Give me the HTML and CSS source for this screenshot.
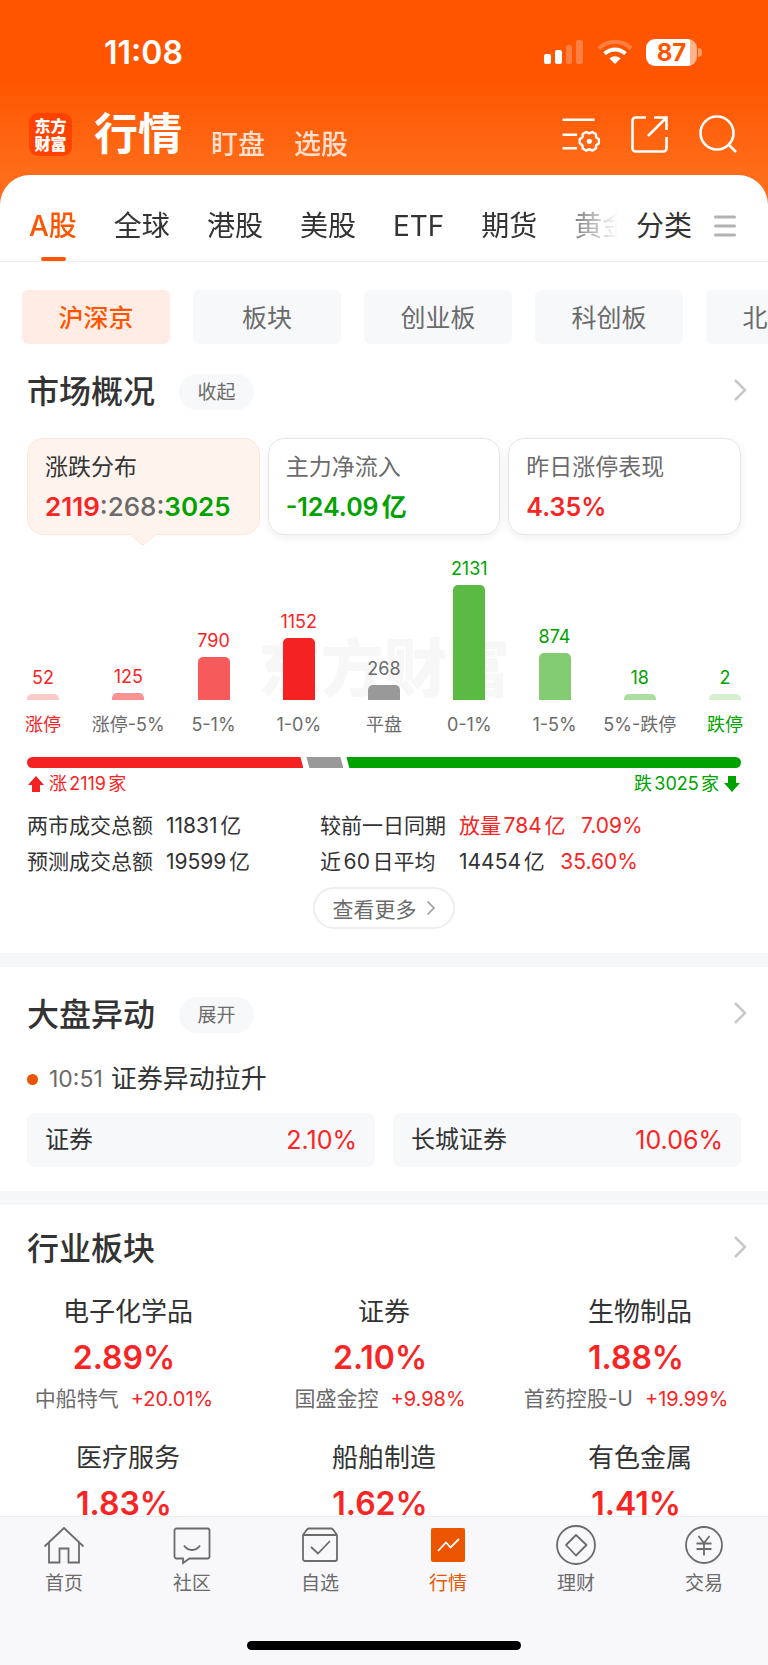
FILE: index.html
```html
<!DOCTYPE html>
<html lang="zh-CN">
<head>
    <meta charset="UTF-8">
    <meta name="viewport" content="width=device-width, initial-scale=1.0">
    <title>行情</title>
    <link rel="stylesheet" href="styles.css">
</head>
<body>
    <header class="header">
        <div class="status-bar">
            <span class="time">11:08</span>
            <div class="status-icons">
                <svg width="40" height="26" viewBox="0 0 40 26" fill="#fff">
                    <rect x="0" y="15" width="7" height="10" rx="2"/>
                    <rect x="11" y="11" width="7" height="14" rx="2"/>
                    <rect x="22" y="6" width="6" height="19" rx="2" opacity=".25"/>
                    <rect x="32" y="1" width="7" height="24" rx="2" opacity=".25"/>
                </svg>
                <svg width="36" height="26" viewBox="0 0 36 26" fill="none" stroke="#fff" stroke-width="4">
                    <path d="M2 9.5C11 .6 25 .6 34 9.5" opacity=".25"/>
                    <path d="M7.6 14.8c6-5.6 14.8-5.6 20.800 0"/>
                    <path d="M12.500 19.500c3.200-2.900 7.800-2.900 11 0L18 25z" fill="#fff" stroke="none"/>
                </svg>
                <div class="battery"><span class="battery-level">87</span></div>
            </div>
        </div>
        <div class="top-bar">
            <div class="logo">东方<br>财富</div>
            <nav class="top-nav">
                <h1>行情</h1>
                <a href="#">盯盘</a>
                <a href="#">选股</a>
            </nav>
            <div class="top-actions">
                <button type="button" aria-label="设置">
                    <svg width="40" height="40" viewBox="0 0 40 40" fill="none" stroke="#fff" stroke-width="2.600">
                        <path d="M2.500 5.700h32M2.500 20.700H17M2.500 34.300H17"/>
                        <path transform="translate(29.300 27.300)" stroke-linejoin="round" stroke-width="2.400" d="M9.600-2v4L6.840 3.950 6.560 7.280 3.030 9.320 0 7.900-3.030 9.320-6.560 7.280-6.840 3.950-9.600 2v-4L-6.840-3.950-6.560-7.280-3.030-9.320 0-7.900 3.030-9.320 6.560-7.280 6.840-3.950z"/>
                        <circle cx="29.300" cy="27.300" r="2.600" fill="#fff" stroke="none"/>
                    </svg>
                </button>
                <button type="button" aria-label="分享">
                    <svg width="40" height="40" viewBox="0 0 40 40" fill="none" stroke="#fff" stroke-width="2.600">
                        <path d="M17 3.500H6.500a3 3 0 0 0-3 3v28a3 3 0 0 0 3 3h28a3 3 0 0 0 3-3V23M25 3.500h12.500V16M37 4 19 22"/>
                    </svg>
                </button>
                <button type="button" aria-label="搜索">
                    <svg width="40" height="40" viewBox="0 0 40 40" fill="none" stroke="#fff" stroke-width="2.600">
                        <circle cx="19" cy="19" r="16.500"/>
                        <path d="M30.500 30.500 38 38"/>
                    </svg>
                </button>
            </div>
        </div>
    </header>

    <main class="sheet">
        <nav class="market-tabs">
            <div class="tab-list">
                <a href="#" class="tab active">A股</a>
                <a href="#" class="tab">全球</a>
                <a href="#" class="tab">港股</a>
                <a href="#" class="tab">美股</a>
                <a href="#" class="tab">ETF</a>
                <a href="#" class="tab">期货</a>
                <a href="#" class="tab">黄金</a>
            </div>
            <button type="button" class="category">分类
                <svg width="22" height="24" viewBox="0 0 22 24" stroke="#b2b2b2" stroke-width="3" stroke-linecap="round">
                    <path d="M1.500 3h19M1.500 12h19M1.500 21h19"/>
                </svg>
            </button>
        </nav>

        <div class="chips">
            <button type="button" class="chip active">沪深京</button>
            <button type="button" class="chip">板块</button>
            <button type="button" class="chip">创业板</button>
            <button type="button" class="chip">科创板</button>
            <button type="button" class="chip">北交所</button>
        </div>

        <!-- 市场概况 -->
        <section class="section overview">
            <div class="section-head">
                <h2>市场概况</h2>
                <button type="button" class="pill">收起</button>
                <a href="#" class="more" aria-label="市场概况"><svg width="14" height="24" viewBox="0 0 14 24" fill="none" stroke="#c8c8c8" stroke-width="2.500"><path d="m2 2 10 10L2 22"/></svg></a>
            </div>

            <div class="cards">
                <div class="card active">
                    <div class="card-name">涨跌分布</div>
                    <div class="card-value"><span class="up">2119</span><span class="flat">:268:</span><span class="down">3025</span></div>
                    <svg class="pointer" width="28" height="12" viewBox="0 0 28 12" fill="#fff3ee" stroke="#ffe6dc"><path d="m1 0 11 10q2 1.500 4 0L27 0"/></svg>
                </div>
                <div class="card">
                    <div class="card-name">主力净流入</div>
                    <div class="card-value down">-124.09亿</div>
                </div>
                <div class="card">
                    <div class="card-name">昨日涨停表现</div>
                    <div class="card-value up">4.35%</div>
                </div>
            </div>

            <div class="chart">
                <div class="watermark">东方财富</div>
                <div class="col up"><span class="num">52</span><i class="bar b1" style="height: 6px"></i><span class="axis">涨停</span></div>
                <div class="col up"><span class="num">125</span><i class="bar b2" style="height: 7px"></i><span class="axis flat">涨停-5%</span></div>
                <div class="col up"><span class="num">790</span><i class="bar b3" style="height: 43px"></i><span class="axis flat">5-1%</span></div>
                <div class="col up"><span class="num">1152</span><i class="bar b4" style="height: 62px"></i><span class="axis flat">1-0%</span></div>
                <div class="col flat"><span class="num">268</span><i class="bar b5" style="height: 15px"></i><span class="axis flat">平盘</span></div>
                <div class="col down"><span class="num">2131</span><i class="bar b6" style="height: 115px"></i><span class="axis flat">0-1%</span></div>
                <div class="col down"><span class="num">874</span><i class="bar b7" style="height: 47px"></i><span class="axis flat">1-5%</span></div>
                <div class="col down"><span class="num">18</span><i class="bar b8" style="height: 6px"></i><span class="axis flat">5%-跌停</span></div>
                <div class="col down"><span class="num">2</span><i class="bar b9" style="height: 6px"></i><span class="axis">跌停</span></div>
            </div>

            <div class="ratio">
                <i class="ratio-up" style="flex-grow: 2119"></i>
                <i class="ratio-flat" style="flex-grow: 268"></i>
                <i class="ratio-down" style="flex-grow: 3025"></i>
            </div>
            <div class="ratio-text">
                <span class="up"><svg width="18" height="18" viewBox="0 0 18 18" fill="#f42222"><path d="m9 1 8 9h-4v7H5v-7H1z"/></svg>涨2119家</span>
                <span class="down">跌3025家<svg width="18" height="18" viewBox="0 0 18 18" fill="#00a200"><path d="m9 17 8-9h-4V1H5v7H1z"/></svg></span>
            </div>

            <div class="stats">
                <span>两市成交总额</span><span>11831亿</span>
                <span>较前一日同期</span><span class="up">放量784亿<b>7.09%</b></span>
                <span>预测成交总额</span><span>19599亿</span>
                <span>近60日平均</span><span>14454亿<b class="up">35.60%</b></span>
            </div>
            <button type="button" class="see-more">查看更多
                <svg width="10" height="16" viewBox="0 0 10 16" fill="none" stroke="#999" stroke-width="1.500"><path d="m1.500 1.500 6.500 6.500-6.500 6.500"/></svg>
            </button>
        </section>

        <!-- 大盘异动 -->
        <section class="section">
            <div class="section-head">
                <h2>大盘异动</h2>
                <button type="button" class="pill">展开</button>
                <a href="#" class="more" aria-label="大盘异动"><svg width="14" height="24" viewBox="0 0 14 24" fill="none" stroke="#c8c8c8" stroke-width="2.500"><path d="m2 2 10 10L2 22"/></svg></a>
            </div>
            <div class="event"><i class="dot"></i><time>10:51</time><span>证券异动拉升</span></div>
            <div class="event-stocks">
                <a href="#">证券<span class="up">2.10%</span></a>
                <a href="#">长城证券<span class="up">10.06%</span></a>
            </div>
        </section>

        <!-- 行业板块 -->
        <section class="section sectors">
            <div class="section-head">
                <h2>行业板块</h2>
                <a href="#" class="more" aria-label="行业板块"><svg width="14" height="24" viewBox="0 0 14 24" fill="none" stroke="#c8c8c8" stroke-width="2.500"><path d="m2 2 10 10L2 22"/></svg></a>
            </div>
            <div class="sector-grid">
                <div class="sector">
                    <div class="sector-name">电子化学品</div>
                    <div class="sector-rate">2.89%</div>
                    <div class="sector-stock">中船特气<span class="up">+20.01%</span></div>
                </div>
                <div class="sector">
                    <div class="sector-name">证券</div>
                    <div class="sector-rate">2.10%</div>
                    <div class="sector-stock">国盛金控<span class="up">+9.98%</span></div>
                </div>
                <div class="sector">
                    <div class="sector-name">生物制品</div>
                    <div class="sector-rate">1.88%</div>
                    <div class="sector-stock">首药控股-U<span class="up">+19.99%</span></div>
                </div>
                <div class="sector">
                    <div class="sector-name">医疗服务</div>
                    <div class="sector-rate">1.83%</div>
                </div>
                <div class="sector">
                    <div class="sector-name">船舶制造</div>
                    <div class="sector-rate">1.62%</div>
                </div>
                <div class="sector">
                    <div class="sector-name">有色金属</div>
                    <div class="sector-rate">1.41%</div>
                </div>
            </div>
        </section>
    </main>

    <footer class="footer">
        <nav class="tab-bar">
            <a href="#">
                <svg width="42" height="42" viewBox="0 0 42 42"><path d="M1.500 21.500 21 3l19.500 18.500M6 17.500V37.500h10.500v-14h9v14H36v-20"/></svg>
                首页
            </a>
            <a href="#">
                <svg width="42" height="42" viewBox="0 0 42 42"><path d="M5.500 3.500h31a2 2 0 0 1 2 2v26a2 2 0 0 1-2 2H18.500L12 38v-4.500H5.500a2 2 0 0 1-2-2v-26a2 2 0 0 1 2-2z"/><path d="M13 20.500c4 6 12 6 16 0"/></svg>
                社区
            </a>
            <a href="#">
                <svg width="42" height="42" viewBox="0 0 42 42"><path d="M4 10 8 4.500q.7-1 2-1h22q1.300 0 2 1L38 10v24a2 2 0 0 1-2 2H6a2 2 0 0 1-2-2zM4 10h34"/><path d="m12 22 7 6.500L31 16"/></svg>
                自选
            </a>
            <a href="#" class="active">
                <svg width="42" height="42" viewBox="0 0 42 42"><rect x="4" y="3" width="34" height="34" rx="2" fill="#eb5500" stroke="none"/><path d="m11 26 8-8.500 4.500 5L32 14" stroke="#fff"/></svg>
                行情
            </a>
            <a href="#">
                <svg width="42" height="42" viewBox="0 0 42 42"><circle cx="21" cy="20" r="19"/><path d="M21 10 31.500 20 21 30.500 11 20z" stroke-linejoin="round"/></svg>
                理财
            </a>
            <a href="#">
                <svg width="42" height="42" viewBox="0 0 42 42"><circle cx="21" cy="20" r="18"/><path d="m15.500 11 5.500 7 5.500-7M21 18v12.500M13.500 18.500h15M13.500 24h15"/></svg>
                交易
            </a>
        </nav>
        <div class="home-indicator"></div>
    </footer>
</body>
</html>
```
FILE: styles.css
```css
* {
    box-sizing: border-box;
}
body {
    margin: 0;
    height: 100vh;
    display: flex;
    flex-direction: column;
    font-family: Inter, "Noto Sans CJK SC", sans-serif;
    color: #333;
    background: linear-gradient(#ff5500 80px, #ff6d1a 175px);
    text-autospace: normal;
    overflow: hidden;
}
a {
    color: inherit;
    text-decoration: none;
}
button {
    font: inherit;
    color: inherit;
    border: none;
    padding: 0;
    background: none;
    cursor: pointer;
}
h1, h2 {
    margin: 0;
    font-weight: 500;
}
svg {
    display: block;
    flex: none;
}
.up {
    color: #f92424;
}
.down {
    color: #00a200;
}
.flat {
    color: #6b6b6b;
}

/* 顶部 */
.header {
    flex: none;
    color: #fff;
    padding-bottom: 11px;
}
.status-bar {
    display: flex;
    justify-content: space-between;
    align-items: center;
    height: 104px;
    padding: 0 71px 0 104px;
}
.time {
    font-size: 32px;
    font-weight: 600;
}
.status-icons {
    display: flex;
    align-items: center;
    gap: 13px;
}
.battery {
    position: relative;
    width: 51px;
    height: 27px;
    border-radius: 9px;
    background: linear-gradient(to right, #fff 44px, #ffb48c 44px);
    text-align: center;
}
.battery::after {
    content: "";
    position: absolute;
    left: 52px;
    top: 9px;
    width: 4px;
    height: 9px;
    border-radius: 0 4px 4px 0;
    background: #ff9a66;
}
.battery-level {
    display: block;
    color: #ff5500;
    font-size: 24px;
    font-weight: 700;
    line-height: 27px;
}
.top-bar {
    display: flex;
    align-items: center;
    height: 60px;
    padding: 0 30px 0 29px;
}
.logo {
    width: 43px;
    height: 43px;
    padding: 4px 0;
    border-radius: 9px;
    background: #ff4200;
    font-size: 16px;
    font-weight: 900;
    line-height: 18px;
    text-align: center;
}
.top-nav {
    display: flex;
    align-items: center;
    gap: 29px;
    margin-left: 22px;
    font-size: 27px;
    font-weight: 500;
}
.top-nav h1 {
    font-size: 44px;
    font-weight: 700;
    line-height: 60px;
}
.top-nav a {
    padding-top: 16px;
    opacity: .8;
}
.top-actions {
    display: flex;
    gap: 29px;
    margin-left: auto;
}

/* 内容 */
.sheet {
    flex: 1;
    min-height: 0;
    overflow: hidden;
    border-radius: 30px 30px 0 0;
    background: #fff;
}
.market-tabs {
    display: flex;
    height: 87px;
    padding: 16px 32px 0 29px;
    border-bottom: 1px solid #eee;
    font-size: 28px;
    line-height: 70px;
}
.tab-list {
    flex: 1;
    min-width: 0;
    display: flex;
    gap: 37px;
    overflow: hidden;
    white-space: nowrap;
    -webkit-mask-image: linear-gradient(to right, #000 calc(100% - 70px), transparent);
    mask-image: linear-gradient(to right, #000 calc(100% - 70px), transparent);
}
.tab {
    flex: none;
    text-autospace: no-autospace;
}
.tab.active {
    position: relative;
    color: #ff5500;
    font-weight: 500;
}
.tab.active::after {
    content: "";
    position: absolute;
    left: calc(50% - 12px);
    bottom: 0;
    width: 25px;
    height: 4px;
    border-radius: 2px;
    background: #ff5500;
}
.category {
    display: flex;
    align-items: center;
    gap: 22px;
    margin-left: 18px;
}
.chips {
    display: flex;
    gap: 23px;
    padding: 28px 0 0 22px;
    overflow: hidden;
}
.chip {
    flex: none;
    width: 148px;
    height: 54px;
    padding-bottom: 2px;
    border-radius: 6px;
    background: #f7f8fa;
    color: #6b6b6b;
    font-size: 25px;
}
.chip.active {
    background: #ffede5;
    color: #ff5500;
    font-weight: 500;
}
.section {
    padding: 28px 27px 24px;
    border-bottom: 14px solid #f6f7f9;
}
.section-head {
    display: flex;
    align-items: center;
    height: 40px;
}
.section-head h2 {
    font-size: 32px;
    line-height: 40px;
}
.pill {
    width: 75px;
    height: 36px;
    margin-left: 24px;
    padding-bottom: 3px;
    border-radius: 18px;
    background: #f7f8fa;
    color: #6b6b6b;
    font-size: 19px;
}
.more {
    margin: 0 -6px 0 auto;
    padding-bottom: 4px;
}

/* 概况卡片 */
.cards {
    display: grid;
    grid-template-columns: repeat(3, 1fr);
    gap: 8px;
    margin-top: 26px;
}
.card {
    position: relative;
    padding: 8px 17px 7px;
    border: 1px solid #e6e6e6;
    border-radius: 16px;
    box-shadow: 0 2px 10px rgba(0, 0, 0, .07);
    line-height: 40px;
}
.card.active {
    background: #fff3ee;
    border-color: #ffe6dc;
    box-shadow: none;
}
.card-name {
    font-size: 23px;
    color: #6b6b6b;
}
.card.active .card-name {
    color: #333;
}
.card-value {
    font-size: 25px;
    font-weight: 600;
}
.card.active .card-value {
    font-size: 26px;
}
.card-value .flat {
    font-weight: 500;
}
.pointer {
    position: absolute;
    left: calc(50% - 14px);
    top: 100%;
}

/* 涨跌分布图 */
.chart {
    position: relative;
    display: flex;
    justify-content: space-between;
    align-items: flex-end;
    height: 202px;
}
.watermark {
    position: absolute;
    left: 0;
    right: 0;
    bottom: 36px;
    text-align: center;
    font-size: 63px;
    font-weight: 900;
    line-height: 66px;
    color: #f7f7f7;
}
.col {
    position: relative;
    display: flex;
    flex-direction: column;
    align-items: center;
    width: 32px;
    font-size: 18px;
    white-space: nowrap;
}
.num {
    line-height: 20px;
    margin-bottom: 6px;
}
.bar {
    width: 32px;
    border-radius: 5px 5px 0 0;
}
.axis {
    margin-top: 13px;
    line-height: 24px;
}
.b1 { background: #fdc8c8; }
.b2 { background: #f99292; }
.b3 { background: #f75a5a; }
.b4 { background: #f42222; }
.b5 { background: #999; }
.b6 { background: #5aba43; }
.b7 { background: #84cc72; }
.b8 { background: #acdea1; }
.b9 { background: #d6efd0; }
.ratio {
    display: flex;
    gap: 3px;
    height: 11px;
    margin-top: 20px;
}
.ratio-up {
    background: #f42222;
    border-radius: 6px 0 0 6px;
    clip-path: polygon(0 0, calc(100% - 3px) 0, 100% 100%, 0 100%);
}
.ratio-flat {
    min-width: 37px;
    background: #999;
    clip-path: polygon(0 0, calc(100% - 3px) 0, 100% 100%, 3px 100%);
}
.ratio-down {
    background: #00a200;
    border-radius: 0 6px 6px 0;
    clip-path: polygon(0 0, 100% 0, 100% 100%, 3px 100%);
}
.ratio-text {
    display: flex;
    justify-content: space-between;
    margin-top: 4px;
    font-size: 18px;
    line-height: 24px;
}
.ratio-text span {
    display: flex;
    align-items: center;
    gap: 4px;
}
.stats {
    display: grid;
    grid-template-columns: 127px 142px 127px 1fr;
    column-gap: 12px;
    margin-top: 12px;
    font-size: 21px;
    line-height: 36px;
    white-space: nowrap;
}
.stats b {
    font-weight: 400;
    margin-left: 13px;
}
.see-more {
    display: flex;
    align-items: center;
    justify-content: center;
    gap: 9px;
    width: 142px;
    height: 42px;
    margin: 7px auto 0;
    border: 2px solid #eee;
    border-radius: 21px;
    color: #6b6b6b;
    font-size: 21px;
}

/* 异动 */
.event {
    display: flex;
    align-items: center;
    margin-top: 26px;
    font-size: 26px;
    line-height: 36px;
}
.dot {
    width: 11px;
    height: 11px;
    margin-right: 11px;
    border-radius: 50%;
    background: #eb5500;
}
.event time {
    margin-right: 8px;
    color: #6b6b6b;
    font-size: 23px;
}
.event-stocks {
    display: grid;
    grid-template-columns: 1fr 1fr;
    gap: 18px;
    margin-top: 16px;
}
.event-stocks a {
    display: flex;
    justify-content: space-between;
    padding: 0 18px;
    border-radius: 8px;
    background: #f7f8fa;
    font-size: 24px;
    line-height: 54px;
}
.event-stocks span {
    font-size: 25px;
}

/* 行业板块 */
.sectors {
    padding-top: 24px;
}
.sector-grid {
    display: grid;
    grid-template-columns: repeat(3, 1fr);
    row-gap: 24px;
    margin: 23px -27px 0;
    text-align: center;
}
.sector-name {
    font-size: 26px;
    line-height: 40px;
}
.sector-rate {
    padding-right: 8px;
    color: #f92424;
    font-size: 32px;
    font-weight: 600;
    line-height: 52px;
}
.sector-stock {
    padding-right: 8px;
    color: #6b6b6b;
    font-size: 21px;
    line-height: 30px;
}
.sector:nth-child(3n) .sector-stock {
    padding-right: 28px;
}
.sector-stock span {
    margin-left: 12px;
    font-size: 20px;
}

/* 底部导航 */
.footer {
    flex: none;
    padding-bottom: 15px;
    border-top: 1px solid #ececf0;
    background: #f8f8fb;
}
.tab-bar {
    display: grid;
    grid-template-columns: repeat(6, 1fr);
    padding-top: 8px;
}
.tab-bar a {
    display: flex;
    flex-direction: column;
    align-items: center;
    gap: 5px;
    color: #6b6b6b;
    font-size: 19px;
    line-height: 24px;
}
.tab-bar svg {
    fill: none;
    stroke: #6b6b6b;
    stroke-width: 1.800;
}
.tab-bar .active {
    color: #eb5500;
}
.home-indicator {
    width: 274px;
    height: 9px;
    margin: 45px auto 0;
    border-radius: 5px;
    background: #000;
}
```
